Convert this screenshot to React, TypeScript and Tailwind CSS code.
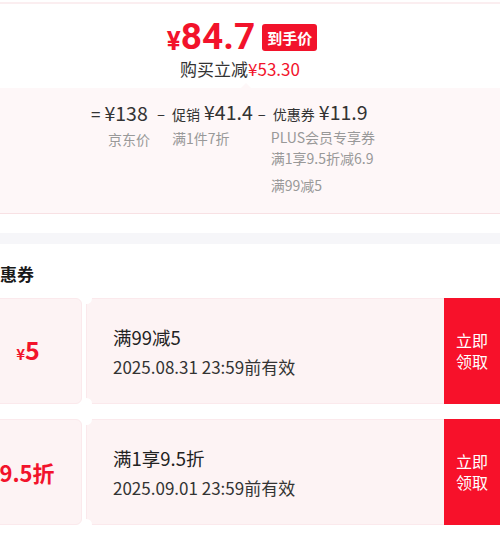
const cjk = { fontFamily: '"Noto Sans CJK SC", "Noto Sans", sans-serif' };

function Notch({ pos }: { pos: "top" | "bottom" }) {
  return (
    <div
      className={
        "absolute left-[-6px] w-[11px] h-[11px] rounded-full bg-white " +
        (pos === "top" ? "top-[-6px]" : "bottom-[-6px]")
      }
    />
  );
}

interface CouponProps {
  left: React.ReactNode;
  title: string;
  date: string;
}

function Coupon({ left, title, date }: CouponProps) {
  return (
    <div className="flex h-[106px] ml-[-28px]">
      <div className="w-[110px] bg-[#fdf3f4] border border-[#fbe9ec] rounded-[6px] flex items-center justify-center">
        {left}
      </div>
      <div className="relative flex-1 bg-[#fdf3f4] border border-[#fbe9ec] border-r-0 rounded-l-[6px] ml-[4px] flex flex-col justify-center pl-[26px] gap-[9px]">
        <Notch pos="top" />
        <Notch pos="bottom" />
        <div className="text-[18.5px] leading-[22px] text-[#222]">{title}</div>
        <div className="text-[17px] leading-[20px] text-[#333]">{date}</div>
      </div>
      <div className="w-[56px] bg-[#f7112a] text-white text-[16px] leading-[21px] flex items-center justify-center text-center">
        <span>
          立即
          <br />
          领取
        </span>
      </div>
    </div>
  );
}

export default function App() {
  return (
    <div className="w-[500px] h-[536px] overflow-hidden bg-white relative" style={cjk}>
      <div className="h-[2px] mt-[2px] bg-[#fbeef0]" />
      {/* price head */}
      <div className="flex flex-col items-center pt-[14px]">
        <div className="flex items-center mr-[16px]">
          <span className="text-[#f2132b] font-bold text-[26px] leading-none mt-[7px]" style={{ fontFamily: '"Roboto", "Noto Sans", sans-serif' }}>¥</span>
          <span className="text-[#f2132b] font-bold text-[37px] leading-[38px]" style={{ fontFamily: '"Roboto", "Noto Sans", sans-serif' }}>84.7</span>
          <span className="ml-[7px] bg-[#f2132b] text-white font-bold text-[15px] leading-[27px] px-[5px] rounded-[3px]">到手价</span>
        </div>
        <div className="mt-[2px] text-[17px] leading-[22px] text-[#333] mr-[20px]">
          购买立减<span className="text-[#f2132b]">¥53.30</span>
        </div>
      </div>
      {/* breakdown */}
      <div className="relative mt-[8px] h-[126px] bg-[#fef7f8] border-b border-[#f8e1e4]">
        <div className="absolute top-[-5px] left-[241px] w-0 h-0 border-l-[5px] border-r-[5px] border-b-[5px] border-l-transparent border-r-transparent border-b-[#fef7f8]" />
        <div className="flex pt-[13px] pl-[91px] text-[#333]">
          <div className="flex flex-col">
            <div className="flex items-baseline gap-[4px]">
              <span className="text-[17px]">=</span>
              <span className="text-[19.5px] leading-[22px]">¥138</span>
            </div>
            <span className="pl-[17px] mt-[3px] text-[14px] leading-[18px] text-[#999]">京东价</span>
          </div>
          <div className="flex flex-col ml-[7px]">
            <div className="flex items-baseline gap-[4px]">
              <span className="text-[15px]">–</span>
              <span className="text-[14px] ml-[3px]">促销</span>
              <span className="text-[19.5px] leading-[22px]">¥41.4</span>
            </div>
            <span className="pl-[15px] mt-[3px] text-[14px] leading-[18px] text-[#999]">满1件7折</span>
          </div>
          <div className="flex flex-col ml-[5px]">
            <div className="flex items-baseline gap-[4px]">
              <span className="text-[15px]">–</span>
              <span className="text-[14px] ml-[3px]">优惠券</span>
              <span className="text-[19.5px] leading-[22px]">¥11.9</span>
            </div>
            <div className="pl-[13px] mt-[1px] text-[14px] leading-[21px] text-[#999] flex flex-col">
              <span>PLUS会员专享券</span>
              <span>满1享9.5折减6.9</span>
              <span className="mt-[6px]">满99减5</span>
            </div>
          </div>
        </div>
      </div>
      <div className="h-[19px]" />
      <div className="h-[11px] bg-[#f6f6f9]" />
      {/* coupons */}
      <div className="pt-[19px]">
        <div className="ml-[-17px] text-[17px] font-bold leading-[22px] text-[#1a1a1a]">优惠券</div>
        <div className="mt-[13px] flex flex-col gap-[15px]">
          <Coupon
            left={
              <div className="text-[#f2132b] font-bold flex items-baseline ml-[2px]">
                <span className="text-[15px]">¥</span>
                <span className="text-[25px] leading-none">5</span>
              </div>
            }
            title="满99减5"
            date="2025.08.31 23:59前有效"
          />
          <Coupon
            left={<span className="text-[#f2132b] font-bold text-[22px] leading-none">9.5折</span>}
            title="满1享9.5折"
            date="2025.09.01 23:59前有效"
          />
        </div>
      </div>
    </div>
  );
}
